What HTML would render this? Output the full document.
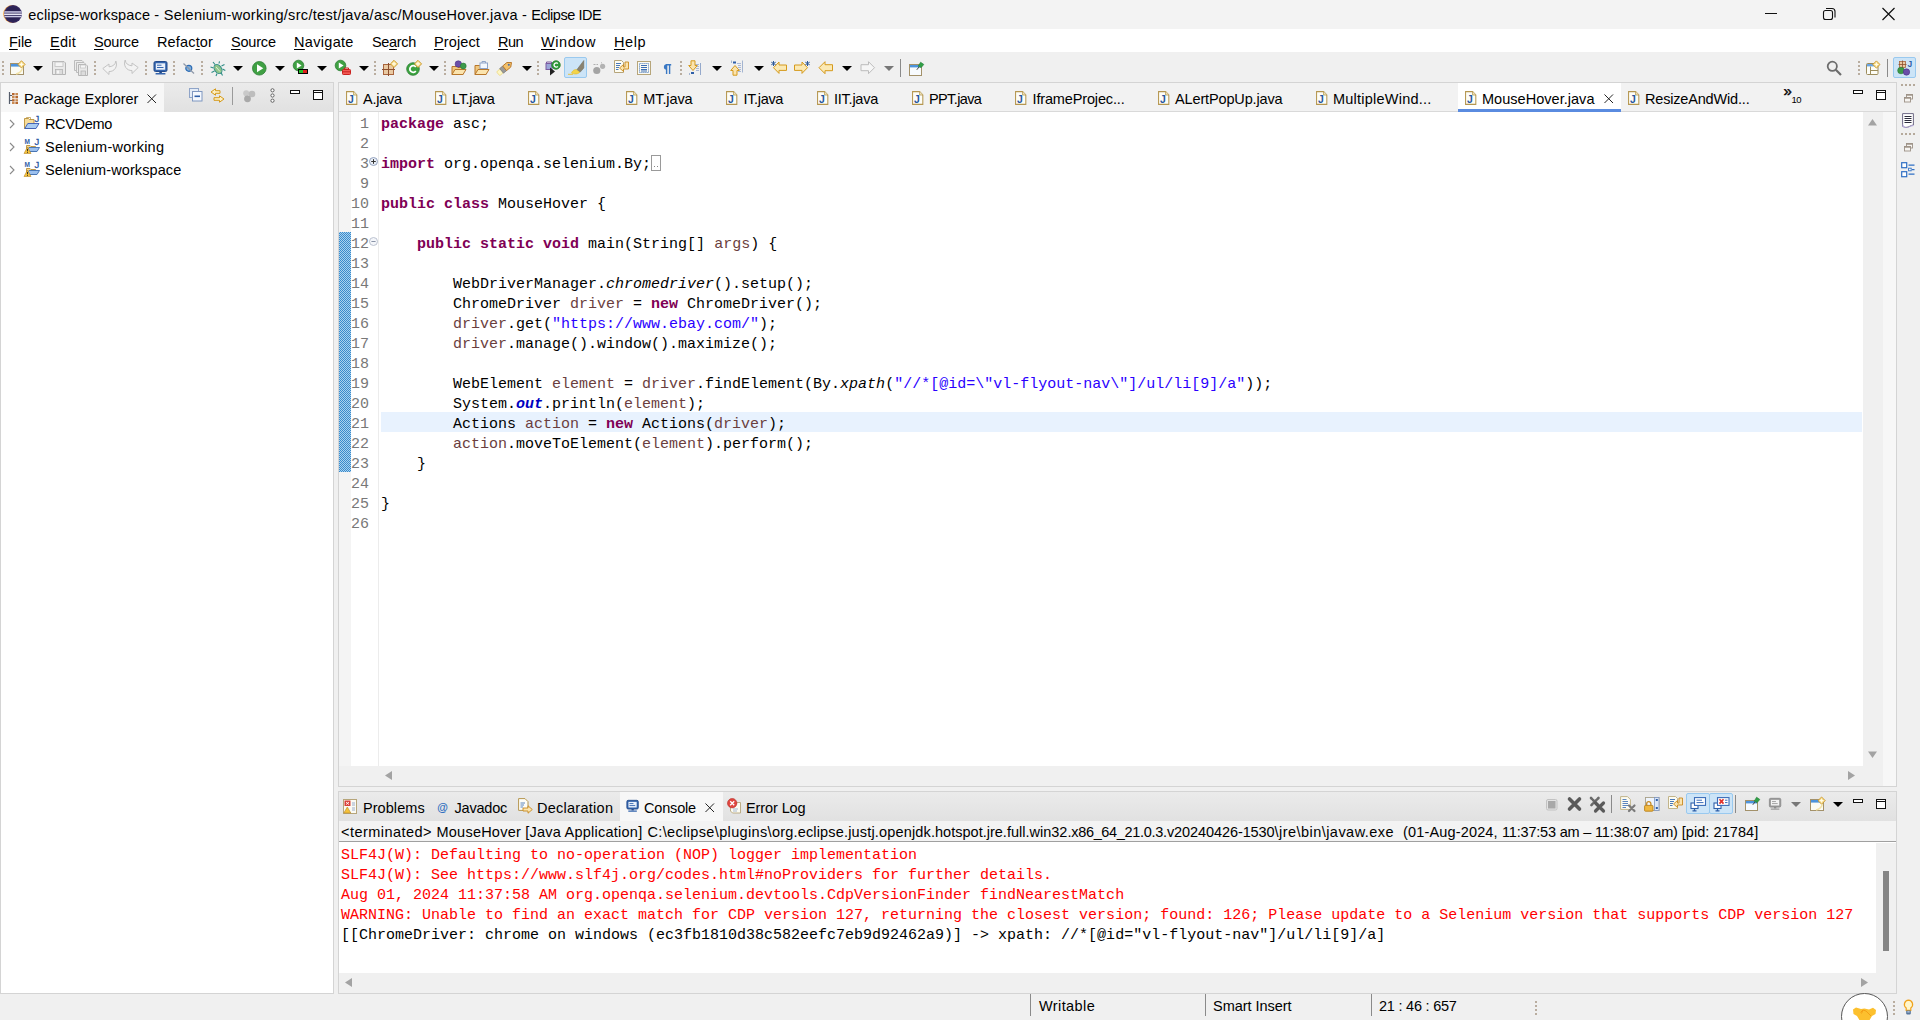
<!DOCTYPE html>
<html lang="en">
<head>
<meta charset="utf-8">
<title>eclipse-workspace - Selenium-working/src/test/java/asc/MouseHover.java - Eclipse IDE</title>
<style>
*{box-sizing:border-box;margin:0;padding:0}
html,body{width:1920px;height:1020px;overflow:hidden;background:#f0f0f0}
body{position:relative;font-family:"Liberation Sans",sans-serif;font-size:15px;color:#000}
.abs{position:absolute}
.t{position:absolute;white-space:nowrap;line-height:20px;height:20px}
svg{position:absolute;overflow:visible}
#titlebar{left:0;top:0;width:1920px;height:29px;background:#f3f3f3}
#menubar{left:0;top:29px;width:1920px;height:23px;background:#fff}
#toolbar{left:0;top:52px;width:1920px;height:30px;background:#f0f0f0}
.menu{top:32px;font-size:14.5px}
.menu u{text-decoration-thickness:1px;text-underline-offset:2px}
/* panels */
.panel{background:#fff;border:1px solid #d4d4d4}
.hdr{background:linear-gradient(#ebebeb,#e1e1e1)}
.mono{font-family:"Liberation Mono",monospace;font-size:15px}
.code{position:absolute;left:381px;white-space:pre;line-height:20px;height:20px;font-family:"Liberation Mono",monospace;font-size:15px;color:#000}
.ln{position:absolute;left:340px;width:29px;text-align:right;line-height:20px;height:20px;font-family:"Liberation Mono",monospace;font-size:15px;color:#787878}
.k{color:#7f0055;font-weight:bold}
.s{color:#2a00ff}
.v{color:#6a3e3e}
.i{font-style:italic}
.f{color:#0000c0;font-weight:bold;font-style:italic}
.con{position:absolute;left:341px;white-space:pre;line-height:20px;height:20px;font-family:"Liberation Mono",monospace;font-size:15px}
.r{color:#ff0000}
.tab{position:absolute;top:89px;white-space:nowrap;line-height:20px;font-size:14.5px}
</style>
</head>
<body>
<!-- TITLE BAR -->
<div id="titlebar" class="abs"></div>
<div class="t" style="left:28px;top:5px;font-size:14.5px;white-space:pre;width:600px"><span class="abs" style="left:0.3px;top:0;letter-spacing:0.15px">eclipse-workspace </span><span class="abs" style="left:126.25px;top:0;letter-spacing:0.32px">- </span><span class="abs" style="left:135.75px;top:0;letter-spacing:0.30px">Selenium-working</span><span class="abs" style="left:255.75px;top:0;letter-spacing:0.32px">/src/test/java/asc</span><span class="abs" style="left:369.5px;top:0;letter-spacing:0.26px">/MouseHover.java </span><span class="abs" style="left:494px;top:0;letter-spacing:0.20px">- </span><span class="abs" style="left:503.25px;top:0;letter-spacing:-0.45px">Eclipse IDE</span></div>
<!-- MENU BAR -->
<div id="menubar" class="abs"></div>
<div class="t menu" style="left:9px;letter-spacing:-0.09px"><u>F</u>ile</div>
<div class="t menu" style="left:50px;letter-spacing:0.25px"><u>E</u>dit</div>
<div class="t menu" style="left:94px;letter-spacing:-0.20px"><u>S</u>ource</div>
<div class="t menu" style="left:157px;letter-spacing:0.15px">Refac<u>t</u>or</div>
<div class="t menu" style="left:231px;letter-spacing:-0.20px"><u>S</u>ource</div>
<div class="t menu" style="left:294px;letter-spacing:0.31px"><u>N</u>avigate</div>
<div class="t menu" style="left:372px;letter-spacing:-0.32px">Se<u>a</u>rch</div>
<div class="t menu" style="left:434px;letter-spacing:0.12px"><u>P</u>roject</div>
<div class="t menu" style="left:498px;letter-spacing:-0.53px"><u>R</u>un</div>
<div class="t menu" style="left:541px;letter-spacing:0.57px"><u>W</u>indow</div>
<div class="t menu" style="left:614px;letter-spacing:0.55px"><u>H</u>elp</div>
<!-- TOOLBAR -->
<div id="toolbar" class="abs"></div>
<style>
.ic{top:60px;width:16px;height:16px}
.dd{position:absolute;top:66px;width:0;height:0;margin-left:-0.2px;border-left:5.1px solid transparent;border-right:5.1px solid transparent;border-top:5.5px solid #000}
.hd{position:absolute;top:61px;width:2px;height:15px;background:repeating-linear-gradient(to bottom,#b9ad9f 0,#b9ad9f 2px,transparent 2px,transparent 4px)}
</style>
<div class="hd" style="left:2px"></div>
<!-- new -->
<svg class="ic" style="left:10px" viewBox="0 0 16 16"><rect x="0.5" y="3.5" width="13" height="11" fill="#fbfbf4" stroke="#a3916a"/><rect x="1" y="4" width="12" height="2.6" fill="#4d93dc"/><g transform="translate(-0.8,0.5)"><path d="M12.3 0.3 L15.9 3.9 L12.3 7.5 L8.7 3.9Z" fill="#f9dd8a" stroke="#c9962a" stroke-width=".9"/><path d="M12.3 2 V5.8 M10.4 3.9 H14.2" stroke="#fffbe8" stroke-width="1.1"/></g><path d="M6 14 Q11 13 12.5 8" fill="none" stroke="#f3e3a6" stroke-width="1.5"/></svg>
<div class="dd" style="left:33px"></div>
<!-- save -->
<svg class="ic" style="left:51px" viewBox="0 0 16 16"><path d="M1.5 1.5 H13 L14.5 3 V14.5 H1.5Z" fill="#e9e9e9" stroke="#b4b4b4"/><rect x="4" y="2" width="8" height="4.5" fill="#f4f4f4" stroke="#c0c0c0" stroke-width=".8"/><rect x="4.5" y="9.5" width="7" height="5" fill="#dcdcdc" stroke="#b4b4b4" stroke-width=".8"/><rect x="6" y="10.5" width="2" height="3" fill="#f6f6f6"/></svg>
<!-- save all -->
<svg class="ic" style="left:73px" viewBox="0 0 16 16"><path d="M1.5 0.5 H9 L10.5 2 V10.5 H1.5Z" fill="#ececec" stroke="#bcbcbc"/><path d="M3.5 2.5 H11 L12.5 4 V12.5 H3.5Z" fill="#ececec" stroke="#bcbcbc"/><path d="M5.5 4.5 H13 L14.5 6 V15.5 H5.5Z" fill="#e9e9e9" stroke="#b4b4b4"/><rect x="7.5" y="5" width="5" height="3" fill="#f6f6f6" stroke="#c4c4c4" stroke-width=".7"/><rect x="8" y="11" width="4.5" height="4.5" fill="#dcdcdc" stroke="#b4b4b4" stroke-width=".8"/></svg>
<div class="hd" style="left:94px"></div>
<!-- undo -->
<svg class="ic" style="left:102px" viewBox="0 0 16 16"><path d="M0.8 8.5 L7 4 V6.8 C11 6.5 13.5 4.5 13.8 1 C16 6.5 12.5 11.8 7 11.5 V14.5Z" fill="#f3f3f3" stroke="#c3c3c3" stroke-linejoin="round"/></svg>
<!-- redo -->
<svg class="ic" style="left:123px;top:59px" viewBox="0 0 16 16"><path d="M15.2 8.5 L9 4 V6.8 C5 6.5 2.5 4.5 2.2 1 C0 6.5 3.5 11.8 9 11.5 V14.5Z" fill="#f3f3f3" stroke="#c3c3c3" stroke-linejoin="round"/></svg>
<div class="hd" style="left:145px"></div>
<!-- terminal -->
<svg class="ic" style="left:153px" viewBox="0 0 16 16"><rect x="1" y="1.5" width="13" height="10" rx="1.5" fill="#3465ad" stroke="#234a8c"/><rect x="2.8" y="3.3" width="9.4" height="6.4" fill="#e9f0fb"/><path d="M4 5.2 H8.5 M4 7.5 H10.5" stroke="#3465ad" stroke-width="1"/><rect x="6.3" y="11.5" width="2.6" height="1.6" fill="#234a8c"/><rect x="2.5" y="13" width="10" height="1.6" rx=".5" fill="#3465ad"/></svg>
<div class="hd" style="left:173px"></div>
<!-- skip breakpoints -->
<svg class="ic" style="left:181px" viewBox="0 0 16 16"><circle cx="7.8" cy="8.3" r="3" fill="#7fb0de" stroke="#2f6db4" stroke-width="1.2"/><path d="M2.5 3.5 L13 13.5" stroke="#8e98a8" stroke-width="1.2"/></svg>
<div class="hd" style="left:201px"></div>
<!-- debug bug -->
<svg class="ic" style="left:210px;top:61px" viewBox="0 0 16 16"><g stroke="#2f8c86" stroke-width="1.1" fill="none"><path d="M5 3.5 L3 1 M9 2.5 L9.5 0.3 M3.5 7 L0.5 6 M4.5 10 L1.5 11.5 M7 12.5 L6 15 M11 11.5 L12.5 14.5 M12.5 8 L15.3 9.5 M11.5 5 L14.5 3.5"/></g><ellipse cx="8" cy="8" rx="3.4" ry="5" transform="rotate(-35 8 8)" fill="#8fc48a" stroke="#2f8c86"/><path d="M6 6 L10 10.5" stroke="#dff0d8" stroke-width="1"/></svg>
<div class="dd" style="left:233px"></div>
<!-- run -->
<svg class="ic" style="left:252px;top:61px" viewBox="0 0 16 16"><circle cx="7.3" cy="7.3" r="6.8" fill="#3fa043" stroke="#2c7d33" stroke-width=".8"/><path d="M5 3.3 L11.3 7.3 L5 11.3Z" fill="#fff"/></svg>
<div class="dd" style="left:275px"></div>
<!-- coverage -->
<svg class="ic" style="left:292px;width:18px" viewBox="0 0 18 16"><circle cx="6.5" cy="5.5" r="5.3" fill="#3fa043" stroke="#2c7d33" stroke-width=".8"/><path d="M4.8 2.5 L9.6 5.5 L4.8 8.5Z" fill="#fff"/><rect x="6" y="9" width="10" height="5" fill="#000"/><rect x="7" y="10" width="4" height="3" fill="#22c02a"/><rect x="11" y="10" width="4" height="3" fill="#e0201c"/></svg>
<div class="dd" style="left:317px"></div>
<!-- ext tools -->
<svg class="ic" style="left:334px;width:18px" viewBox="0 0 18 16"><circle cx="6.5" cy="5.5" r="5.3" fill="#3fa043" stroke="#2c7d33" stroke-width=".8"/><path d="M4.8 2.5 L9.6 5.5 L4.8 8.5Z" fill="#fff"/><rect x="8.5" y="9.5" width="8" height="5" rx=".8" fill="#f25a55" stroke="#c9211e"/><path d="M10.5 9.5 V8 H14.5 V9.5 M8.5 11.8 H16.5" stroke="#c9211e" fill="none"/></svg>
<div class="dd" style="left:359px"></div>
<div class="hd" style="left:374px"></div>
<!-- new package -->
<svg class="ic" style="left:382px" viewBox="0 0 16 16"><rect x="1.5" y="4.5" width="10" height="10" fill="#e9c9a2" stroke="#a8643c"/><path d="M6.5 3 V16 M0 9.5 H13" stroke="#8d4f2e" stroke-width="1"/><path d="M12 0.3 L15.6 3.9 L12 7.5 L8.4 3.9Z" fill="#f9dd8a" stroke="#c9962a" stroke-width=".9"/><path d="M12 2 V5.8 M10.1 3.9 H13.9" stroke="#fffbe8" stroke-width="1.1"/></svg>
<!-- new class -->
<svg class="ic" style="left:406px" viewBox="0 0 16 16"><circle cx="7" cy="9" r="6.3" fill="#3ba23f" stroke="#2c7d33" stroke-width=".8"/><path d="M9.8 7 A3.3 3.3 0 1 0 9.8 11" fill="none" stroke="#fff" stroke-width="1.8"/><path d="M12 0.3 L15.6 3.9 L12 7.5 L8.4 3.9Z" fill="#f9dd8a" stroke="#c9962a" stroke-width=".9"/><path d="M12 2 V5.8 M10.1 3.9 H13.9" stroke="#fffbe8" stroke-width="1.1"/></svg>
<div class="dd" style="left:429px"></div>
<div class="hd" style="left:444px"></div>
<!-- open type -->
<svg class="ic" style="left:451px" viewBox="0 0 16 16"><path d="M1 6.5 H6 L7 7.5 H12 V14.5 H1Z" fill="#f0c77d" stroke="#b8772a"/><path d="M1 14.5 L4 9.5 H15 L12 14.5Z" fill="#fbe4ae" stroke="#b8772a"/><circle cx="7.3" cy="4" r="3.2" fill="#6a4ea8" stroke="#4b3388" stroke-width=".6"/><circle cx="12.3" cy="6" r="2.9" fill="#3d9a4a" stroke="#2a7836" stroke-width=".6"/></svg>
<!-- open task -->
<svg class="ic" style="left:474px" viewBox="0 0 16 16"><path d="M1 5.5 H5.5 L6.5 6.5 H12 V14.5 H1Z" fill="#f0c77d" stroke="#b8772a"/><rect x="6" y="3" width="7.5" height="5.5" fill="#f4f8fe" stroke="#8fa4c8"/><path d="M8 3 V1.5 H11.5 V3" fill="none" stroke="#8fa4c8"/><path d="M1 14.5 L4 9.5 H15 L12 14.5Z" fill="#fbe4ae" stroke="#b8772a"/></svg>
<!-- search flashlight -->
<svg class="ic" style="left:497px" viewBox="0 0 16 16"><g transform="rotate(-40 8 8)"><rect x="-1" y="5.5" width="5" height="5" rx="1" fill="#fdf6c4" stroke="#e8cf6a" stroke-width=".6"/><rect x="3.5" y="5" width="4" height="6" fill="#9a9a9a" stroke="#707070" stroke-width=".6"/><path d="M7.5 5 H13 L16.5 8 L13 11 H7.5Z" fill="#f3c16a" stroke="#b8772a" stroke-width=".9"/><circle cx="13" cy="8" r="1" fill="#4d6fa8"/></g></svg>
<div class="dd" style="left:522px"></div>
<div class="hd" style="left:537px"></div>
<!-- open type in hierarchy -->
<svg class="ic" style="left:545px" viewBox="0 0 16 16"><rect x="1" y="3.5" width="6" height="6" fill="#9aa6d8" stroke="#7a5aa0"/><path d="M1.5 3.5 V2 H6.5 V3.5" fill="none" stroke="#7a5aa0"/><path d="M5 7.5 L10 11.5 L5 15.5Z" fill="#222"/><circle cx="11" cy="5" r="4.3" fill="#2f9a3a" stroke="#1f7a2a" stroke-width=".7"/><path d="M12.8 3.7 A2.1 2.1 0 1 0 12.8 6.3" fill="none" stroke="#fff" stroke-width="1.3"/></svg>
<!-- toggle mark occurrences (selected) -->
<div class="abs" style="left:564px;top:57px;width:23px;height:21px;background:#cce4f7;border:1px solid #99c9ef;border-radius:2px"></div>
<svg class="ic" style="left:568px" viewBox="0 0 16 16"><path d="M0 14.3 H5" stroke="#e9c33a" stroke-width="1"/><path d="M3.5 13 C5 9.5 8 9 9.5 10 L12 12 C10 14.5 6 14.5 3.5 13Z" fill="#f3d44a" stroke="#e2bb2c" stroke-width=".6"/><path d="M9 9.5 L15.8 0.5 L15.8 8 L12.3 12Z" fill="#8a8370" stroke="#6f6a5a" stroke-width=".5"/></svg>
<!-- gray bubbles -->
<svg class="ic" style="left:592px" viewBox="0 0 16 16"><circle cx="4.8" cy="10.5" r="3.6" fill="#a4a4a4"/><circle cx="10.6" cy="6.3" r="2.6" fill="#b2b2b2"/><path d="M1.5 4.5 H6 M9 2.5 L10 3.2" stroke="#b0b0b0" stroke-width="1" stroke-dasharray="2 1"/></svg>
<!-- word wrap -->
<svg class="ic" style="left:613px;top:59px" viewBox="0 0 16 16"><path d="M1.5 1.5 H8.5 L10.5 3.5 V13.5 H1.5Z" fill="#fdfcf2" stroke="#b6a57a"/><path d="M3 4.5 H8 M3 6.5 H7 M3 8.5 H6 M3 10.5 H5.5" stroke="#4a78b8" stroke-width="1"/><path d="M12 3 H15.5 V10 H10.5 V12.5 L6.5 9 L10.5 5.5 V8 H12Z" fill="#fbe4ae" stroke="#c88a20" stroke-width=".9"/></svg>
<!-- block selection -->
<svg class="ic" style="left:636px" viewBox="0 0 16 16"><rect x="1.5" y="1.5" width="13" height="13" fill="#fbfaf3" stroke="#b6a57a"/><rect x="3.5" y="3.5" width="9" height="9" fill="none" stroke="#3c6eb4" stroke-width=".8" stroke-dasharray="1.2 .8"/><path d="M5 5.5 H11 M5 7.5 H11 M5 9.5 H11 M5 11 H11" stroke="#3c6eb4" stroke-width="1"/></svg>
<!-- pilcrow -->
<svg class="ic" style="left:660px;top:61px" viewBox="0 0 16 16"><path d="M11.2 3.8 H5.8 M6.6 3.8 V13 M9.6 3.8 V13" fill="none" stroke="#3a78c4" stroke-width="1.4"/><path d="M6.6 3.2 A2.7 2.7 0 0 0 6.6 8.6Z" fill="#3a78c4"/></svg>
<div class="hd" style="left:680px"></div>
<!-- next annotation -->
<svg class="ic" style="left:688px;top:60px" viewBox="0 0 16 16"><path d="M12.5 3 V15 M7 4.5 H11 M8 6.5 H11 M8 8.5 H11 M8 10.5 H11" stroke="#aab8d6" stroke-width="1"/><rect x="3" y="12" width="3" height="2" fill="#2f5fa8"/><path d="M1.5 13 V15 M12.5 3 V15" stroke="#8fa4c8" stroke-width=".8"/><path d="M3 0.8 H7 V5.5 H9.3 L5 10.5 L0.7 5.5 H3Z" fill="#fbe4ae" stroke="#d59a1c" stroke-width="1"/></svg>
<div class="dd" style="left:712px"></div>
<!-- prev annotation -->
<svg class="ic" style="left:730px;top:60px" viewBox="0 0 16 16"><path d="M7 3.5 H11 M8 5.5 H11 M8 7.5 H11 M8 9.5 H11 M8 11.5 H11" stroke="#aab8d6" stroke-width="1"/><rect x="3" y="1.5" width="3" height="2" fill="#2f5fa8"/><path d="M1.5 0.5 V3 M12.5 0.5 V12.5" stroke="#8fa4c8" stroke-width=".8"/><path d="M3 15.2 H7 V10.5 H9.3 L5 5.5 L0.7 10.5 H3Z" fill="#fbe4ae" stroke="#d59a1c" stroke-width="1"/></svg>
<div class="dd" style="left:754px"></div>
<!-- last edit -->
<svg class="ic" style="left:771px" viewBox="0 0 16 16"><path d="M8 2 L2.5 7.7 L8 13.4 V10.4 H15.5 V5 H8Z" fill="#fbe9b4" stroke="#d59a1c" stroke-width="1" stroke-linejoin="round"/><path d="M2.5 1 V6 M0.3 2.2 L4.7 4.8 M4.7 2.2 L0.3 4.8" stroke="#2f5a98" stroke-width="1"/></svg>
<!-- next edit -->
<svg class="ic" style="left:794px" viewBox="0 0 16 16"><path d="M8 2 L13.5 7.7 L8 13.4 V10.4 H0.5 V5 H8Z" fill="#fbe9b4" stroke="#d59a1c" stroke-width="1" stroke-linejoin="round"/><path d="M13.5 1 V6 M11.3 2.2 L15.7 4.8 M15.7 2.2 L11.3 4.8" stroke="#2f5a98" stroke-width="1"/></svg>
<!-- back -->
<svg class="ic" style="left:818px" viewBox="0 0 16 16"><path d="M7 1.7 L1 7.7 L7 13.7 V10.7 H14.5 V4.7 H7Z" fill="#fbe9b4" stroke="#d59a1c" stroke-width="1" stroke-linejoin="round"/></svg>
<div class="dd" style="left:842px"></div>
<!-- forward (disabled) -->
<svg class="ic" style="left:860px" viewBox="0 0 16 16"><path d="M8.5 1.7 L14.5 7.7 L8.5 13.7 V10.7 H1 V4.7 H8.5Z" fill="#f6f6f6" stroke="#bcbcbc" stroke-width="1" stroke-linejoin="round"/></svg>
<div class="dd" style="left:884px;border-top-color:#777"></div>
<div class="abs" style="left:900px;top:59px;width:1px;height:18px;background:#8a8a8a"></div>
<!-- pin editor -->
<svg class="ic" style="left:908px;top:61px" viewBox="0 0 16 16"><rect x="1.5" y="3.5" width="12" height="11" fill="#f8fbfe" stroke="#a3916a"/><rect x="2" y="4" width="11" height="2.4" fill="#4d93dc"/><path d="M10.2 5.2 L12.6 1.2 L15.8 3.4 L13.2 6.6Z" fill="#2fa046" stroke="#1f7a32" stroke-width=".6"/><path d="M11 6 L8.8 8.8" stroke="#444" stroke-width="1"/></svg>
<!-- right side -->
<svg class="ic" style="left:1826px;top:60px" viewBox="0 0 16 16"><circle cx="6.3" cy="6.3" r="4.6" fill="none" stroke="#6d6d6d" stroke-width="1.8"/><path d="M9.8 9.8 L15 15" stroke="#6d6d6d" stroke-width="2.2"/></svg>
<div class="hd" style="left:1858px"></div>
<svg class="ic" style="left:1865px;top:59px" viewBox="0 0 16 16"><rect x="1.5" y="4.5" width="11.5" height="11" rx="1" fill="#fdfdf6" stroke="#9c8c5c"/><rect x="2" y="5" width="10.5" height="2.4" fill="#6aa5e4"/><path d="M5.5 7.5 V15.5 M5.5 11.5 H13" stroke="#9c8c5c"/><g transform="translate(-0.6,1.6)"><path d="M12 0.3 L15.6 3.9 L12 7.5 L8.4 3.9Z" fill="#f9dd8a" stroke="#c9962a" stroke-width=".9"/><path d="M12 2 V5.8 M10.1 3.9 H13.9" stroke="#fffbe8" stroke-width="1.1"/></g></svg>
<div class="abs" style="left:1887px;top:59px;width:1px;height:18px;background:#8a8a8a"></div>
<div class="abs" style="left:1893px;top:57px;width:23px;height:21px;background:#cce4f7;border:1px solid #99c9ef;border-radius:2px"></div>
<svg class="ic" style="left:1897px" viewBox="0 0 16 16"><rect x="2.5" y="1.5" width="6" height="6" fill="#e9c9a2" stroke="#a8643c" stroke-width=".8"/><path d="M5.5 0.5 V8.5 M1.5 4.5 H9.5" stroke="#8d4f2e" stroke-width=".8"/><circle cx="4" cy="10.5" r="3.3" fill="#3d9a4a" stroke="#2a7836" stroke-width=".6"/><circle cx="9.5" cy="12" r="3.2" fill="#6a4ea8" stroke="#4b3388" stroke-width=".6"/><text x="10.5" y="7" font-family="Liberation Sans,sans-serif" font-weight="bold" font-size="8.5" fill="#2f5fa8">J</text></svg>

<!-- PACKAGE EXPLORER -->
<div id="pe" class="abs panel" style="left:0;top:82px;width:334px;height:912px"></div>
<div class="abs hdr" style="left:1px;top:83px;width:332px;height:29px"></div>
<div class="abs" style="left:1px;top:83px;width:163px;height:29px;background:#f7f7f7"></div>
<div class="tab" style="left:24px">Package Explorer</div>
<!-- eclipse logo -->
<svg style="left:3px;top:4px;width:20px;height:20px" viewBox="0 0 20 20"><defs><radialGradient id="eg" cx="50%" cy="50%" r="50%"><stop offset="0.8" stop-color="#2c2255"/><stop offset="1" stop-color="#3a2f6a"/></radialGradient><clipPath id="ec"><circle cx="10" cy="10" r="9"/></clipPath></defs><circle cx="9.2" cy="10" r="9" fill="#f7a13a"/><circle cx="10" cy="10" r="9" fill="url(#eg)"/><g clip-path="url(#ec)"><rect x="0" y="7.2" width="20" height="1.5" fill="#c9c6e4"/><rect x="0" y="9.5" width="20" height="1.5" fill="#e6e4f4"/><rect x="0" y="11.8" width="20" height="1.5" fill="#c9c6e4"/></g></svg>
<!-- window controls -->
<svg style="left:1760px;top:0;width:160px;height:29px" viewBox="0 0 160 29"><path d="M5 13.5 H17" stroke="#111" stroke-width="1"/><rect x="63.5" y="10.5" width="9" height="9" rx="2" fill="none" stroke="#111" stroke-width="1.1"/><path d="M66 8.5 H72 A3 3 0 0 1 75 11.5 V17.5" fill="none" stroke="#111" stroke-width="1.1"/><path d="M122.5 8 L134.5 20 M134.5 8 L122.5 20" stroke="#111" stroke-width="1.2"/></svg>
<!-- PE tab icon -->
<svg style="left:8px;top:92px;width:11px;height:12px" viewBox="0 0 11 12"><path d="M1.5 0 V12 M1.5 3.5 H4 M1.5 8.5 H4" stroke="#555d6b" stroke-width="1.2" fill="none"/><rect x="4" y="1" width="2.6" height="2.3" fill="#b5672f"/><rect x="7.4" y="1" width="2.6" height="2.3" fill="#c98a52"/><rect x="4" y="4" width="2.6" height="2.3" fill="#c98a52"/><rect x="7.4" y="4" width="2.6" height="2.3" fill="#b5672f"/><rect x="4" y="7.2" width="2.6" height="2.3" fill="#b5672f"/><rect x="7.4" y="7.2" width="2.6" height="2.3" fill="#c98a52"/><rect x="4" y="10" width="2.6" height="2" fill="#c98a52"/><rect x="7.4" y="10" width="2.6" height="2" fill="#b5672f"/></svg>
<svg style="left:147px;top:94px;width:9.5px;height:9.5px" viewBox="0 0 10 10"><path d="M0.5 0.5 L9.5 9.5 M9.5 0.5 L0.5 9.5" stroke="#222" stroke-width="1.05"/></svg>
<!-- PE toolbar -->
<svg style="left:189px;top:88px;width:14px;height:14px" viewBox="0 0 14 14"><rect x="0.5" y="0.5" width="9" height="9" fill="#e4ecf7" stroke="#8fa4c8"/><rect x="3.5" y="3.5" width="9.5" height="9.5" fill="#f4f8fe" stroke="#7f97c0"/><path d="M5.5 8.3 H11" stroke="#2f5fa8" stroke-width="1.6"/></svg>
<svg style="left:210px;top:88px;width:16px;height:16px" viewBox="0 0 16 16"><path d="M5.5 0.8 L1 4 L5.5 7.2 V5.3 H10 V2.7 H5.5Z" fill="#fdf0c4" stroke="#d59a1c" stroke-width="1" stroke-linejoin="round"/><path d="M9.5 7.8 L14 11 L9.5 14.2 V12.3 H4 V9.7 H9.5Z" fill="#fdf0c4" stroke="#d59a1c" stroke-width="1" stroke-linejoin="round"/></svg>
<div class="abs" style="left:232px;top:87px;width:1px;height:18px;background:#9a9a9a"></div>
<svg style="left:242px;top:89px;width:14px;height:14px" viewBox="0 0 14 14"><circle cx="4.2" cy="4.2" r="3" fill="#c9c9c9"/><circle cx="10" cy="5" r="3.3" fill="#bdbdbd"/><circle cx="5.5" cy="9.8" r="3.4" fill="#a9a9a9"/></svg>
<svg style="left:269px;top:88px;width:7px;height:15px" viewBox="0 0 7 15"><circle cx="3.5" cy="2.3" r="1.6" fill="#fff" stroke="#555" stroke-width=".9"/><circle cx="3.5" cy="7.5" r="1.6" fill="#fff" stroke="#555" stroke-width=".9"/><circle cx="3.5" cy="12.7" r="1.6" fill="#fff" stroke="#555" stroke-width=".9"/></svg>
<div class="abs" style="left:290px;top:90px;width:10px;height:4px;border:1px solid #111;background:#fff"></div>
<div class="abs" style="left:313px;top:90px;width:10px;height:10px;border:1px solid #111;background:linear-gradient(#fff 0,#fff 1px,#111 1px,#111 2px,#fff 2px)"></div>
<!-- tree -->
<style>
.tw{position:absolute;left:9px;width:6px;height:10px}
.tr{position:absolute;left:45px;white-space:nowrap;line-height:20px;font-size:14.5px}
</style>
<svg class="tw" style="top:119px" viewBox="0 0 6 10"><path d="M1 1 L5 5 L1 9" fill="none" stroke="#8a8a8a" stroke-width="1.1"/></svg>
<svg class="tw" style="top:142px" viewBox="0 0 6 10"><path d="M1 1 L5 5 L1 9" fill="none" stroke="#8a8a8a" stroke-width="1.1"/></svg>
<svg class="tw" style="top:165px" viewBox="0 0 6 10"><path d="M1 1 L5 5 L1 9" fill="none" stroke="#8a8a8a" stroke-width="1.1"/></svg>
<!-- RCVDemo icon -->
<svg style="left:24px;top:115px;width:16px;height:16px" viewBox="0 0 16 16"><path d="M0.5 3.5 H4.5 L5.5 4.5 H10 V13.5 H0.5Z" fill="#f7dd9c" stroke="#b8903a" stroke-width=".9"/><path d="M2.5 3.5 V2.5 H6.5 V4.5" fill="none" stroke="#b8903a" stroke-width=".7"/><path d="M0.8 13.5 L3.8 8.5 H15 L12 13.5Z" fill="#a9cbf2" stroke="#3558b4" stroke-width=".9"/><text x="10.6" y="7.2" font-family="Liberation Sans,sans-serif" font-size="9.5" fill="#2a58a4" stroke="#2a58a4" stroke-width=".3">J</text></svg>
<svg style="left:24px;top:138px;width:16px;height:16px" viewBox="0 0 16 16"><path d="M2.5 7.5 H6 L7 8.5 H11.5 V13.5 H2.5Z" fill="#f3d591" stroke="#b8903a" stroke-width=".9"/><path d="M2.5 13.5 L5 9.5 H15.5 L13 13.5Z" fill="#9cc0ee" stroke="#3c6eb4" stroke-width=".9"/><text x="0.5" y="6" font-family="Liberation Sans,sans-serif" font-weight="bold" font-size="6.5" fill="#2f5fa8">M</text><text x="10.6" y="7.2" font-family="Liberation Sans,sans-serif" font-size="9.5" fill="#2a58a4" stroke="#2a58a4" stroke-width=".3">J</text><path d="M3.5 9 L7 15.5 H0Z" fill="#f5c23a" stroke="#b8862a" stroke-width=".6"/><path d="M3.5 11 V13.3 M3.5 14 V14.8" stroke="#222" stroke-width=".9"/></svg>
<svg style="left:24px;top:161px;width:16px;height:16px" viewBox="0 0 16 16"><path d="M2.5 7.5 H6 L7 8.5 H11.5 V13.5 H2.5Z" fill="#f3d591" stroke="#b8903a" stroke-width=".9"/><path d="M2.5 13.5 L5 9.5 H15.5 L13 13.5Z" fill="#9cc0ee" stroke="#3c6eb4" stroke-width=".9"/><text x="0.5" y="6" font-family="Liberation Sans,sans-serif" font-weight="bold" font-size="6.5" fill="#2f5fa8">M</text><text x="10.6" y="7.2" font-family="Liberation Sans,sans-serif" font-size="9.5" fill="#2a58a4" stroke="#2a58a4" stroke-width=".3">J</text><path d="M3.5 9 L7 15.5 H0Z" fill="#f5c23a" stroke="#b8862a" stroke-width=".6"/><path d="M3.5 11 V13.3 M3.5 14 V14.8" stroke="#222" stroke-width=".9"/></svg>
<div class="tr" style="top:114px;letter-spacing:-0.35px">RCVDemo</div>
<div class="tr" style="top:137px;letter-spacing:0.25px">Selenium-working</div>
<div class="tr" style="top:160px;letter-spacing:0.1px">Selenium-workspace</div>

<!-- EDITOR -->
<div id="ed" class="abs panel" style="left:338px;top:82px;width:1559px;height:705px"></div>
<div class="abs" style="left:339px;top:83px;width:1557px;height:29px;background:#f2f2f2;border-bottom:1px solid #d9d9d9"></div>
<style>.jf{width:11.4px;height:14px;top:91px}</style>
<div class="abs" style="left:1458px;top:83px;width:163px;height:29px;background:#fff"></div>
<div class="abs" style="left:1458px;top:109px;width:163px;height:3px;background:#5a8be0"></div>
<svg preserveAspectRatio="none" class="jf" style="left:345.5px" viewBox="0 0 12 14"><path d="M0.6 0.6 H8 L11.4 4 V13.4 H0.6Z" fill="#fdfdf8" stroke="#b5964f" stroke-width="1.1"/><path d="M8 0.6 V4 H11.4" fill="#f1e6c4" stroke="#b5964f" stroke-width=".8"/><text x="2.2" y="11.6" font-family="Liberation Sans,sans-serif" font-weight="bold" font-size="11" fill="#27559f">J</text></svg>
<div class="tab" style="left:363px;letter-spacing:-0.26px">A.java</div>
<svg preserveAspectRatio="none" class="jf" style="left:434.5px" viewBox="0 0 12 14"><path d="M0.6 0.6 H8 L11.4 4 V13.4 H0.6Z" fill="#fdfdf8" stroke="#b5964f" stroke-width="1.1"/><path d="M8 0.6 V4 H11.4" fill="#f1e6c4" stroke="#b5964f" stroke-width=".8"/><text x="2.2" y="11.6" font-family="Liberation Sans,sans-serif" font-weight="bold" font-size="11" fill="#27559f">J</text></svg>
<div class="tab" style="left:452px;letter-spacing:-0.34px">LT.java</div>
<svg preserveAspectRatio="none" class="jf" style="left:527.5px" viewBox="0 0 12 14"><path d="M0.6 0.6 H8 L11.4 4 V13.4 H0.6Z" fill="#fdfdf8" stroke="#b5964f" stroke-width="1.1"/><path d="M8 0.6 V4 H11.4" fill="#f1e6c4" stroke="#b5964f" stroke-width=".8"/><text x="2.2" y="11.6" font-family="Liberation Sans,sans-serif" font-weight="bold" font-size="11" fill="#27559f">J</text></svg>
<div class="tab" style="left:545px;letter-spacing:-0.12px">NT.java</div>
<svg preserveAspectRatio="none" class="jf" style="left:625.5px" viewBox="0 0 12 14"><path d="M0.6 0.6 H8 L11.4 4 V13.4 H0.6Z" fill="#fdfdf8" stroke="#b5964f" stroke-width="1.1"/><path d="M8 0.6 V4 H11.4" fill="#f1e6c4" stroke="#b5964f" stroke-width=".8"/><text x="2.2" y="11.6" font-family="Liberation Sans,sans-serif" font-weight="bold" font-size="11" fill="#27559f">J</text></svg>
<div class="tab" style="left:643.25px;letter-spacing:-0.10px">MT.java</div>
<svg preserveAspectRatio="none" class="jf" style="left:725.5px" viewBox="0 0 12 14"><path d="M0.6 0.6 H8 L11.4 4 V13.4 H0.6Z" fill="#fdfdf8" stroke="#b5964f" stroke-width="1.1"/><path d="M8 0.6 V4 H11.4" fill="#f1e6c4" stroke="#b5964f" stroke-width=".8"/><text x="2.2" y="11.6" font-family="Liberation Sans,sans-serif" font-weight="bold" font-size="11" fill="#27559f">J</text></svg>
<div class="tab" style="left:743.5px;letter-spacing:-0.34px">IT.java</div>
<svg preserveAspectRatio="none" class="jf" style="left:816.5px" viewBox="0 0 12 14"><path d="M0.6 0.6 H8 L11.4 4 V13.4 H0.6Z" fill="#fdfdf8" stroke="#b5964f" stroke-width="1.1"/><path d="M8 0.6 V4 H11.4" fill="#f1e6c4" stroke="#b5964f" stroke-width=".8"/><text x="2.2" y="11.6" font-family="Liberation Sans,sans-serif" font-weight="bold" font-size="11" fill="#27559f">J</text></svg>
<div class="tab" style="left:834px;letter-spacing:-0.24px">IIT.java</div>
<svg preserveAspectRatio="none" class="jf" style="left:911.5px" viewBox="0 0 12 14"><path d="M0.6 0.6 H8 L11.4 4 V13.4 H0.6Z" fill="#fdfdf8" stroke="#b5964f" stroke-width="1.1"/><path d="M8 0.6 V4 H11.4" fill="#f1e6c4" stroke="#b5964f" stroke-width=".8"/><text x="2.2" y="11.6" font-family="Liberation Sans,sans-serif" font-weight="bold" font-size="11" fill="#27559f">J</text></svg>
<div class="tab" style="left:929px;letter-spacing:-0.62px">PPT.java</div>
<svg preserveAspectRatio="none" class="jf" style="left:1014.5px" viewBox="0 0 12 14"><path d="M0.6 0.6 H8 L11.4 4 V13.4 H0.6Z" fill="#fdfdf8" stroke="#b5964f" stroke-width="1.1"/><path d="M8 0.6 V4 H11.4" fill="#f1e6c4" stroke="#b5964f" stroke-width=".8"/><text x="2.2" y="11.6" font-family="Liberation Sans,sans-serif" font-weight="bold" font-size="11" fill="#27559f">J</text></svg>
<div class="tab" style="left:1032.5px;letter-spacing:-0.15px">IframeProjec...</div>
<svg preserveAspectRatio="none" class="jf" style="left:1157.5px" viewBox="0 0 12 14"><path d="M0.6 0.6 H8 L11.4 4 V13.4 H0.6Z" fill="#fdfdf8" stroke="#b5964f" stroke-width="1.1"/><path d="M8 0.6 V4 H11.4" fill="#f1e6c4" stroke="#b5964f" stroke-width=".8"/><text x="2.2" y="11.6" font-family="Liberation Sans,sans-serif" font-weight="bold" font-size="11" fill="#27559f">J</text></svg>
<div class="tab" style="left:1175px;letter-spacing:-0.14px">ALertPopUp.java</div>
<svg preserveAspectRatio="none" class="jf" style="left:1315.5px" viewBox="0 0 12 14"><path d="M0.6 0.6 H8 L11.4 4 V13.4 H0.6Z" fill="#fdfdf8" stroke="#b5964f" stroke-width="1.1"/><path d="M8 0.6 V4 H11.4" fill="#f1e6c4" stroke="#b5964f" stroke-width=".8"/><text x="2.2" y="11.6" font-family="Liberation Sans,sans-serif" font-weight="bold" font-size="11" fill="#27559f">J</text></svg>
<div class="tab" style="left:1333px;letter-spacing:0.23px">MultipleWind...</div>
<svg preserveAspectRatio="none" class="jf" style="left:1464.5px" viewBox="0 0 12 14"><path d="M0.6 0.6 H8 L11.4 4 V13.4 H0.6Z" fill="#fdfdf8" stroke="#b5964f" stroke-width="1.1"/><path d="M8 0.6 V4 H11.4" fill="#f1e6c4" stroke="#b5964f" stroke-width=".8"/><text x="2.2" y="11.6" font-family="Liberation Sans,sans-serif" font-weight="bold" font-size="11" fill="#27559f">J</text></svg>
<div class="tab" style="left:1482px;letter-spacing:0.03px">MouseHover.java</div>
<svg preserveAspectRatio="none" class="jf" style="left:1627.5px" viewBox="0 0 12 14"><path d="M0.6 0.6 H8 L11.4 4 V13.4 H0.6Z" fill="#fdfdf8" stroke="#b5964f" stroke-width="1.1"/><path d="M8 0.6 V4 H11.4" fill="#f1e6c4" stroke="#b5964f" stroke-width=".8"/><text x="2.2" y="11.6" font-family="Liberation Sans,sans-serif" font-weight="bold" font-size="11" fill="#27559f">J</text></svg>
<div class="tab" style="left:1645px;letter-spacing:-0.18px">ResizeAndWid...</div>
<svg style="left:1604px;top:94px;width:9.5px;height:9.5px" viewBox="0 0 10 10"><path d="M0.5 0.5 L9.5 9.5 M9.5 0.5 L0.5 9.5" stroke="#222" stroke-width="1.05"/></svg>
<div class="t" style="left:1783.5px;top:81px;font-size:15px;-webkit-text-stroke:0.4px #000">»</div>
<div class="t" style="left:1791.5px;top:90px;font-size:9.5px;letter-spacing:-0.5px">10</div>
<div class="abs" style="left:1853px;top:90px;width:10px;height:4px;border:1px solid #111;background:#fff"></div>
<div class="abs" style="left:1876px;top:90px;width:10px;height:10px;border:1px solid #111;background:linear-gradient(#fff 0,#fff 1px,#111 1px,#111 2px,#fff 2px)"></div>

<div class="abs" style="left:339px;top:112px;width:12px;height:654px;background:#f4f4f4"></div>
<div class="abs" style="left:378px;top:112px;width:1px;height:654px;background:#ececec"></div>
<div class="abs" style="left:339px;top:232px;width:12px;height:240px;background:repeating-conic-gradient(#3b8acb 0 25%,#a9d2ef 0 50%) 0 0/2px 2px"></div>
<div class="abs" style="left:381px;top:412px;width:1481px;height:20px;background:#e8f2fe"></div>
<div class="ln" style="top:115px">1</div>
<div class="code" style="top:115px"><span class="k">package</span> asc;</div>
<div class="ln" style="top:135px">2</div>
<div class="ln" style="top:155px">3</div>
<div class="code" style="top:155px"><span class="k">import</span> org.openqa.selenium.By;</div>
<div class="ln" style="top:175px">9</div>
<div class="ln" style="top:195px">10</div>
<div class="code" style="top:195px"><span class="k">public</span> <span class="k">class</span> MouseHover {</div>
<div class="ln" style="top:215px">11</div>
<div class="ln" style="top:235px">12</div>
<div class="code" style="top:235px">    <span class="k">public</span> <span class="k">static</span> <span class="k">void</span> main(String[] <span class="v">args</span>) {</div>
<div class="ln" style="top:255px">13</div>
<div class="ln" style="top:275px">14</div>
<div class="code" style="top:275px">        WebDriverManager.<span class="i">chromedriver</span>().setup();</div>
<div class="ln" style="top:295px">15</div>
<div class="code" style="top:295px">        ChromeDriver <span class="v">driver</span> = <span class="k">new</span> ChromeDriver();</div>
<div class="ln" style="top:315px">16</div>
<div class="code" style="top:315px">        <span class="v">driver</span>.get(<span class="s">"https://www.ebay.com/"</span>);</div>
<div class="ln" style="top:335px">17</div>
<div class="code" style="top:335px">        <span class="v">driver</span>.manage().window().maximize();</div>
<div class="ln" style="top:355px">18</div>
<div class="ln" style="top:375px">19</div>
<div class="code" style="top:375px">        WebElement <span class="v">element</span> = <span class="v">driver</span>.findElement(By.<span class="i">xpath</span>(<span class="s">"//*[@id=\"vl-flyout-nav\"]/ul/li[9]/a"</span>));</div>
<div class="ln" style="top:395px">20</div>
<div class="code" style="top:395px">        System.<span class="f">out</span>.println(<span class="v">element</span>);</div>
<div class="ln" style="top:415px">21</div>
<div class="code" style="top:415px">        Actions <span class="v">action</span> = <span class="k">new</span> Actions(<span class="v">driver</span>);</div>
<div class="ln" style="top:435px">22</div>
<div class="code" style="top:435px">        <span class="v">action</span>.moveToElement(<span class="v">element</span>).perform();</div>
<div class="ln" style="top:455px">23</div>
<div class="code" style="top:455px">    }</div>
<div class="ln" style="top:475px">24</div>
<div class="ln" style="top:495px">25</div>
<div class="code" style="top:495px">}</div>
<div class="ln" style="top:515px">26</div>
<svg style="left:369px;top:157px;width:9px;height:9px" viewBox="0 0 9 9"><circle cx="4.5" cy="4.5" r="4" fill="#e9eef6" stroke="#8a9ab8" stroke-width=".9"/><path d="M2.2 4.5 H6.8 M4.5 2.2 V6.8" stroke="#333" stroke-width="1"/></svg>
<svg style="left:369px;top:237px;width:9px;height:9px" viewBox="0 0 9 9"><circle cx="4.5" cy="4.5" r="4" fill="#f4f6fa" stroke="#b4bccb" stroke-width=".9"/><path d="M2.4 4.5 H6.6" stroke="#8a94a8" stroke-width="1"/></svg>
<div class="abs" style="left:651px;top:155px;width:10px;height:16px;border:1px solid #9a9a9a;background:#fff"></div><div class="abs" style="left:654px;top:166px;width:1px;height:1px;background:#888"></div><div class="abs" style="left:657px;top:166px;width:1px;height:1px;background:#888"></div>
<div class="abs" style="left:1863px;top:112px;width:20px;height:654px;background:#f0f0f0"></div>
<svg style="left:1868px;top:119px;width:9px;height:7px" viewBox="0 0 9 7"><path d="M0 6.5 L4.5 0 L9 6.5Z" fill="#a3a3a3"/></svg>
<svg style="left:1868px;top:751px;width:9px;height:7px" viewBox="0 0 9 7"><path d="M0 0.5 L4.5 7 L9 0.5Z" fill="#a3a3a3"/></svg>
<div class="abs" style="left:339px;top:766px;width:1557px;height:20px;background:#f0f0f0"></div>
<div class="abs" style="left:1883px;top:112px;width:13px;height:674px;background:#f7f7f7"></div>
<svg style="left:385px;top:771px;width:7px;height:9px" viewBox="0 0 7 9"><path d="M7 0 L0 4.5 L7 9Z" fill="#a3a3a3"/></svg>
<svg style="left:1848px;top:771px;width:7px;height:9px" viewBox="0 0 7 9"><path d="M0 0 L7 4.5 L0 9Z" fill="#a3a3a3"/></svg>

<!-- CONSOLE -->
<div id="co" class="abs panel" style="left:338px;top:791px;width:1559px;height:203px"></div>
<div class="abs hdr" style="left:339px;top:792px;width:1557px;height:29px"></div>
<style>.ct{position:absolute;top:798px;white-space:nowrap;line-height:20px;font-size:14.5px}</style>
<div class="abs" style="left:620px;top:792px;width:103px;height:29px;background:#f7f7f7"></div>
<!-- problems icon -->
<svg style="left:343px;top:799px;width:15px;height:15px" viewBox="0 0 15 15"><rect x="0.5" y="0.5" width="13" height="14" fill="#fbfaf3" stroke="#b6a57a"/><rect x="1.5" y="1.5" width="6" height="5.5" fill="#d9403a"/><path d="M3 3 L6 5.6 M6 3 L3 5.6" stroke="#fff" stroke-width=".9"/><path d="M2 8 L5.5 14 H-1.5Z" transform="translate(2.3,0)" fill="#f5c23a" stroke="#b8862a" stroke-width=".6"/><path d="M9 4 H12 M9 6 H12 M9 9 H12 M9 11 H12" stroke="#8fa4c8" stroke-width=".9"/></svg>
<div class="ct" style="left:363px;letter-spacing:0.06px">Problems</div>
<div class="ct" style="left:437px;top:797px;font-size:11px;font-weight:bold;font-style:italic;color:#2f6fc0">@</div>
<div class="ct" style="left:454.5px;letter-spacing:-0.2px">Javadoc</div>
<svg style="left:518px;top:798px;width:15px;height:16px" viewBox="0 0 15 16"><path d="M0.6 0.6 H7 L10 3.6 V12.4 H0.6Z" fill="#fdfdf8" stroke="#b5964f" stroke-width="1"/><path d="M2.5 5 H7 M2.5 7 H6 M2.5 9 H5" stroke="#4a78b8" stroke-width=".9"/><path d="M5 10 H10 V7.8 L14.3 11.5 L10 15.2 V13 H5Z" fill="#fbe4ae" stroke="#c88a20" stroke-width=".9" stroke-linejoin="round"/></svg>
<div class="ct" style="left:537px;letter-spacing:0.26px">Declaration</div>
<svg style="left:626px;top:799px;width:14px;height:14px" viewBox="0 0 16 16"><rect x="1" y="1.5" width="13" height="10" rx="1.5" fill="#3465ad" stroke="#234a8c"/><rect x="2.8" y="3.3" width="9.4" height="6.4" fill="#e9f0fb"/><path d="M4 5.2 H8.5 M4 7.5 H10.5" stroke="#3465ad" stroke-width="1"/><rect x="6.3" y="11.5" width="2.6" height="1.6" fill="#234a8c"/><rect x="2.5" y="13" width="10" height="1.6" rx=".5" fill="#3465ad"/></svg>
<div class="ct" style="left:644px;letter-spacing:-0.17px">Console</div>
<svg style="left:705px;top:803px;width:9.5px;height:9.5px" viewBox="0 0 10 10"><path d="M0.5 0.5 L9.5 9.5 M9.5 0.5 L0.5 9.5" stroke="#222" stroke-width="1.05"/></svg>
<svg style="left:727px;top:798px;width:15px;height:16px" viewBox="0 0 15 16"><path d="M3.5 4.5 H13.5 V15 H5.5 L3.5 13Z" fill="#fdfcf2" stroke="#b6a57a" stroke-width=".9"/><path d="M6 11 H11 M6 13 H10" stroke="#8fa4c8" stroke-width=".8"/><circle cx="5.2" cy="5.2" r="4.7" fill="#e0463f" stroke="#b52a25" stroke-width=".6"/><path d="M3.2 3.2 L7.2 7.2 M7.2 3.2 L3.2 7.2" stroke="#fff" stroke-width="1.3"/></svg>
<div class="ct" style="left:746px;letter-spacing:-0.1px">Error Log</div>
<!-- console toolbar -->
<svg style="left:1546px;top:799px;width:12px;height:12px" viewBox="0 0 12 12"><rect x="0.5" y="0.5" width="10.5" height="10.5" rx="1.5" fill="#e3e3e3" stroke="#c2c2c2"/><rect x="2" y="2" width="7.5" height="7.5" fill="#a8a8a8"/></svg>
<svg style="left:1567px;top:797px;width:15px;height:14px" viewBox="0 0 15 14"><path d="M2.5 2 L12.5 12 M12.5 2 L2.5 12" stroke="#5a5a5a" stroke-width="3.6" stroke-linecap="round"/></svg>
<svg style="left:1589px;top:796px;width:17px;height:17px" viewBox="0 0 17 17"><path d="M2 2 L9.5 9.5 M9.5 2 L2 9.5" stroke="#6a6a6a" stroke-width="2.6" stroke-linecap="round" stroke-dasharray="1.6 1.2"/><path d="M6.5 7 L14.5 15 M14.5 7 L6.5 15" stroke="#5a5a5a" stroke-width="3.2" stroke-linecap="round"/></svg>
<div class="abs" style="left:1611px;top:795px;width:1px;height:18px;background:#8a8a8a"></div>
<svg style="left:1620px;top:796px;width:16px;height:16px" viewBox="0 0 16 16"><path d="M0.6 0.6 H7.5 L10.4 3.5 V13.4 H0.6Z" fill="#fdfcf2" stroke="#c2b48a" stroke-width="1"/><path d="M2.5 3.5 H6.5 M2.5 5.5 H8 M2.5 7.5 H8 M2.5 9.5 H8 M2.5 11.5 H6" stroke="#4a78b8" stroke-width=".9"/><path d="M9 9.5 L14.5 15 M14.5 9.5 L9 15" stroke="#7a7a7a" stroke-width="2.2" stroke-linecap="round"/></svg>
<svg style="left:1644px;top:797px;width:16px;height:15px" viewBox="0 0 16 15"><rect x="1.5" y="0.5" width="13.5" height="13" fill="#eef4fd" stroke="#a8a08a" stroke-width=".9"/><rect x="10.5" y="0.5" width="4.5" height="13" fill="#dbe6f7" stroke="#7f97c0" stroke-width=".8"/><rect x="11.8" y="2" width="2" height="2" fill="#2f5fa8"/><rect x="11.8" y="10" width="2" height="2" fill="#2f5fa8"/><path d="M2.7 8.5 V6.8 A2.1 2.1 0 0 1 6.9 6.8 V8.5" fill="none" stroke="#c88a20" stroke-width="1.3"/><rect x="0.6" y="8.4" width="8.4" height="5.8" rx=".8" fill="#f0b840" stroke="#b8801c" stroke-width=".9"/></svg>
<svg style="left:1667px;top:796px;width:16px;height:16px" viewBox="0 0 16 16"><path d="M1.5 0.5 H8.5 L10.5 2.5 V12.5 H1.5Z" fill="#fdfcf2" stroke="#c2b48a"/><path d="M3 3.5 H8 M3 5.5 H7 M3 7.5 H6 M3 9.5 H5.5" stroke="#4a78b8" stroke-width="1"/><path d="M12 2 H15.5 V9 H10.5 V11.5 L6.5 8 L10.5 4.5 V7 H12Z" fill="#fbe4ae" stroke="#c88a20" stroke-width=".9"/></svg>
<div class="abs" style="left:1686px;top:793px;width:24px;height:21px;background:#cce4f7;border:1px solid #99c9ef;border-radius:2px"></div>
<div class="abs" style="left:1709px;top:793px;width:24px;height:21px;background:#cce4f7;border:1px solid #99c9ef;border-radius:2px"></div>
<svg style="left:1690px;top:797px;width:16px;height:15px" viewBox="0 0 16 15"><rect x="1" y="6" width="7" height="5.5" fill="#fff" stroke="#2f5fa8" stroke-width="1.1"/><path d="M2.5 13.8 H6.5 M4.5 11.5 V13.5" stroke="#2f5fa8" stroke-width="1.2"/><rect x="4.5" y="0.6" width="11" height="7.8" fill="#fff" stroke="#3a6cb8" stroke-width="1.1"/><path d="M6.5 3.2 H12 M6.5 5.6 H13.5" stroke="#3a6cb8" stroke-width="1"/></svg>
<svg style="left:1713px;top:797px;width:17px;height:15px" viewBox="0 0 17 15"><rect x="1" y="6" width="7" height="5.5" fill="#fff" stroke="#2f5fa8" stroke-width="1.1"/><path d="M2.5 13.8 H6.5 M4.5 11.5 V13.5" stroke="#2f5fa8" stroke-width="1.2"/><rect x="4.5" y="0.6" width="11.5" height="7.8" fill="#fff" stroke="#3a6cb8" stroke-width="1.1"/><path d="M6.5 2.2 L10.5 6.6 M10.5 2.2 L6.5 6.6" stroke="#e0302a" stroke-width="1.7"/><path d="M12 3.2 H14.5 M12 5.6 H14.5" stroke="#3a6cb8" stroke-width="1"/></svg>
<div class="abs" style="left:1735px;top:795px;width:1px;height:18px;background:#8a8a8a"></div>
<svg style="left:1745px;top:796px;width:16px;height:16px" viewBox="0 0 16 16"><rect x="0.5" y="4.5" width="12" height="10" fill="#f8fbfe" stroke="#a3916a"/><rect x="1" y="5" width="11" height="2.4" fill="#4d93dc"/><path d="M9.2 5.2 L11.6 1.2 L14.8 3.4 L12.2 6.6Z" fill="#2fa046" stroke="#1f7a32" stroke-width=".6"/><path d="M10 6 L7.8 8.8" stroke="#444" stroke-width="1"/></svg>
<svg style="left:1768px;top:797px;width:15px;height:14px" viewBox="0 0 16 16"><rect x="1" y="1.5" width="13" height="10" rx="1.5" fill="#9a9a9a" stroke="#8a8a8a"/><rect x="2.8" y="3.3" width="9.4" height="6.4" fill="#f2f2f2"/><path d="M4 5.2 H8.5 M4 7.5 H10.5" stroke="#9a9a9a" stroke-width="1"/><rect x="6.3" y="11.5" width="2.6" height="1.6" fill="#8a8a8a"/><rect x="2.5" y="13" width="10" height="1.6" rx=".5" fill="#9a9a9a"/></svg>
<div class="dd" style="left:1791px;top:802px;border-top-color:#777"></div>
<svg style="left:1810px;top:795px;width:17px;height:17px" viewBox="0 0 17 17"><rect x="0.5" y="4.5" width="13" height="11" fill="#fbfbf4" stroke="#a3916a"/><rect x="1" y="5" width="12" height="2.6" fill="#4d93dc"/><g transform="translate(-1.4,1.7)"><path d="M13 0.3 L16.6 3.9 L13 7.5 L9.4 3.9Z" fill="#f9dd8a" stroke="#c9962a" stroke-width=".9"/><path d="M13 2 V5.8 M11.1 3.9 H14.9" stroke="#fffbe8" stroke-width="1.1"/></g><path d="M6 15 Q11 14 12.5 9" fill="none" stroke="#f3e3a6" stroke-width="1.5"/></svg>
<div class="dd" style="left:1833px;top:802px"></div>
<div class="abs" style="left:1853px;top:799px;width:10px;height:4px;border:1px solid #111;background:#fff"></div>
<div class="abs" style="left:1876px;top:799px;width:10px;height:10px;border:1px solid #111;background:linear-gradient(#fff 0,#fff 1px,#111 1px,#111 2px,#fff 2px)"></div>
<!-- description line -->
<div class="abs" style="left:339px;top:821px;width:1557px;height:21px;background:#f3f3f3;border-bottom:1px solid #a0a0a0"></div>
<div class="t" id="desc" style="left:341px;top:822px;font-size:14.5px;white-space:pre;width:1450px"><span class="abs" style="left:0px;top:0;letter-spacing:0.46px">&lt;terminated&gt; </span><span class="abs" style="left:95.5px;top:0;letter-spacing:0.23px">MouseHover </span><span class="abs" style="left:184.25px;top:0;letter-spacing:0.24px">[Java Application] </span><span class="abs" style="left:306.5px;top:0;letter-spacing:0.36px">C:\eclipse\plugins\</span><span class="abs" style="left:431px;top:0;letter-spacing:0.17px">org.eclipse.justj.openjdk</span><span class="abs" style="left:590px;top:0;letter-spacing:0.01px">.hotspot.jre.full.win32</span><span class="abs" style="left:726.5px;top:0;letter-spacing:-0.32px">.x86_64_21.0.3</span><span class="abs" style="left:822px;top:0;letter-spacing:-0.09px">.v20240426-1530</span><span class="abs" style="left:933.5px;top:0;letter-spacing:0.46px">\jre\bin\javaw.exe  </span><span class="abs" style="left:1062px;top:0;letter-spacing:0.16px">(01-Aug-2024, </span><span class="abs" style="left:1161px;top:0;letter-spacing:-0.19px">11:37:53 am – </span><span class="abs" style="left:1254px;top:0;letter-spacing:-0.13px">11:38:07 am) </span><span class="abs" style="left:1340.7px;top:0;letter-spacing:0.07px">[pid: 21784]</span></div>
<!-- console text -->
<div class="con r" style="top:846px">SLF4J(W): Defaulting to no-operation (NOP) logger implementation</div>
<div class="con r" style="top:866px">SLF4J(W): See https://www.slf4j.org/codes.html#noProviders for further details.</div>
<div class="con r" style="top:886px">Aug 01, 2024 11:37:58 AM org.openqa.selenium.devtools.CdpVersionFinder findNearestMatch</div>
<div class="con r" style="top:906px">WARNING: Unable to find an exact match for CDP version 127, returning the closest version; found: 126; Please update to a Selenium version that supports CDP version 127</div>
<div class="con" style="top:926px">[[ChromeDriver: chrome on windows (ec3fb1810d38c582eefc7eb9d92462a9)] -&gt; xpath: //*[@id="vl-flyout-nav"]/ul/li[9]/a]</div>
<!-- console scrollbars -->
<div class="abs" style="left:1876px;top:843px;width:20px;height:130px;background:#f0f0f0"></div>
<div class="abs" style="left:1883px;top:871px;width:6px;height:80px;background:#858585"></div>
<div class="abs" style="left:339px;top:973px;width:1557px;height:20px;background:#f0f0f0"></div>
<svg style="left:345px;top:978px;width:7px;height:9px" viewBox="0 0 7 9"><path d="M7 0 L0 4.5 L7 9Z" fill="#a3a3a3"/></svg>
<svg style="left:1861px;top:978px;width:7px;height:9px" viewBox="0 0 7 9"><path d="M0 0 L7 4.5 L0 9Z" fill="#a3a3a3"/></svg>

<!-- RIGHT BAR -->
<div class="abs" style="left:1897px;top:82px;width:23px;height:912px;background:#f0f0f0"></div>
<div class="abs" style="left:1901px;top:84px;width:15px;height:2px;background:repeating-linear-gradient(to right,#b5a99b 0,#b5a99b 2px,transparent 2px,transparent 4px)"></div>
<svg style="left:1904px;top:94px;width:9px;height:9px" viewBox="0 0 9 9"><rect x="2.5" y="0.5" width="6" height="4.5" fill="#f6f4f1" stroke="#9c9186" stroke-width=".9"/><path d="M2.5 1 H8.5" stroke="#9c9186" stroke-width="1.4"/><rect x="0.5" y="3.5" width="6" height="4.5" fill="#f6f4f1" stroke="#9c9186" stroke-width=".9"/><path d="M0.5 4 H6.5" stroke="#9c9186" stroke-width="1.4"/></svg>
<svg style="left:1902px;top:113px;width:12px;height:15px" viewBox="0 0 12 15"><path d="M0.6 0.6 H11.4 V12 C9 12 7 14.4 4 14.4 C2 14.4 1.5 13.4 0.6 13.4Z" fill="#fff" stroke="#6f6a86" stroke-width="1"/><path d="M0.6 11 C2 13.4 3 14.4 4 14.4 C7 14.4 9 12 11.4 12 V13 C8 13.5 6 15 3.5 15 C2 15 0.6 13.4 0.6 13.4Z" fill="#b7a9dc"/><path d="M2.5 3.5 H9.5 M2.5 5.5 H9.5 M2.5 7.5 H9.5 M2.5 9.5 H9.5" stroke="#2e2e3e" stroke-width="1"/></svg>
<div class="abs" style="left:1901px;top:133px;width:15px;height:2px;background:repeating-linear-gradient(to right,#b5a99b 0,#b5a99b 2px,transparent 2px,transparent 4px)"></div>
<svg style="left:1904px;top:143px;width:9px;height:9px" viewBox="0 0 9 9"><rect x="2.5" y="0.5" width="6" height="4.5" fill="#f6f4f1" stroke="#9c9186" stroke-width=".9"/><path d="M2.5 1 H8.5" stroke="#9c9186" stroke-width="1.4"/><rect x="0.5" y="3.5" width="6" height="4.5" fill="#f6f4f1" stroke="#9c9186" stroke-width=".9"/><path d="M0.5 4 H6.5" stroke="#9c9186" stroke-width="1.4"/></svg>
<svg style="left:1901px;top:162px;width:14px;height:16px" viewBox="0 0 14 16"><rect x="0.7" y="0.7" width="5" height="5" fill="#fff" stroke="#2f6fc4" stroke-width="1.2"/><rect x="0.7" y="9.7" width="5" height="5" fill="#fff" stroke="#2f6fc4" stroke-width="1.2"/><path d="M7.5 3.2 H13.5 M7.5 12.2 H13.5 M11 7.7 H13.5" stroke="#2f6fc4" stroke-width="1.2"/><rect x="7.6" y="6.2" width="2.6" height="2.6" fill="#fff" stroke="#2f6fc4" stroke-width=".9"/></svg>

<!-- STATUS BAR -->
<div class="abs" style="left:1030px;top:994px;width:1px;height:22px;background:#8a8a8a"></div>
<div class="abs" style="left:1205px;top:994px;width:1px;height:22px;background:#8a8a8a"></div>
<div class="abs" style="left:1371px;top:994px;width:1px;height:22px;background:#8a8a8a"></div>
<div class="t" style="left:1039px;top:996px;font-size:14.5px;letter-spacing:0.4px">Writable</div>
<div class="t" style="left:1213px;top:996px;font-size:14.5px;letter-spacing:-0.03px">Smart Insert</div>
<div class="t" style="left:1379px;top:996px;font-size:14.5px;letter-spacing:-0.23px">21 : 46 : 657</div>
<div class="hd" style="left:1535px;top:1001px;height:14px"></div>
<div class="abs" style="left:1841px;top:993px;width:47px;height:47px;border-radius:50%;background:#fff;border:1px solid #585858"></div>
<svg style="left:1852px;top:1007px;width:25px;height:14px" viewBox="0 0 25 14"><path d="M1 2.5 L4 0.5 L9 2 L12.5 1.5 L17 2.5 L21 0.8 L24 3 L23.5 7 L20 9 L17 14 H8 L5 9 L1.5 7Z" fill="#fcc02e"/><path d="M8.5 5.5 L11 3 L14 4 L19 9 M11 3 L9.5 6.5" stroke="#f39c12" stroke-width=".9" fill="none"/></svg>
<div class="hd" style="left:1893px;top:1001px;height:14px"></div>
<svg style="left:1903px;top:999px;width:11px;height:17px" viewBox="0 0 11 17"><path d="M5.5 1.2 A4.3 4.3 0 0 0 3.2 9 V11.3 H7.8 V9 A4.3 4.3 0 0 0 5.5 1.2Z" fill="#fff6cc" stroke="#f0a21c" stroke-width="1.2"/><rect x="3.2" y="11.6" width="4.6" height="3.8" rx=".8" fill="#57769c"/><rect x="4.3" y="12.4" width="2.4" height="1" fill="#dfe7f2"/></svg>

</body>
</html>
